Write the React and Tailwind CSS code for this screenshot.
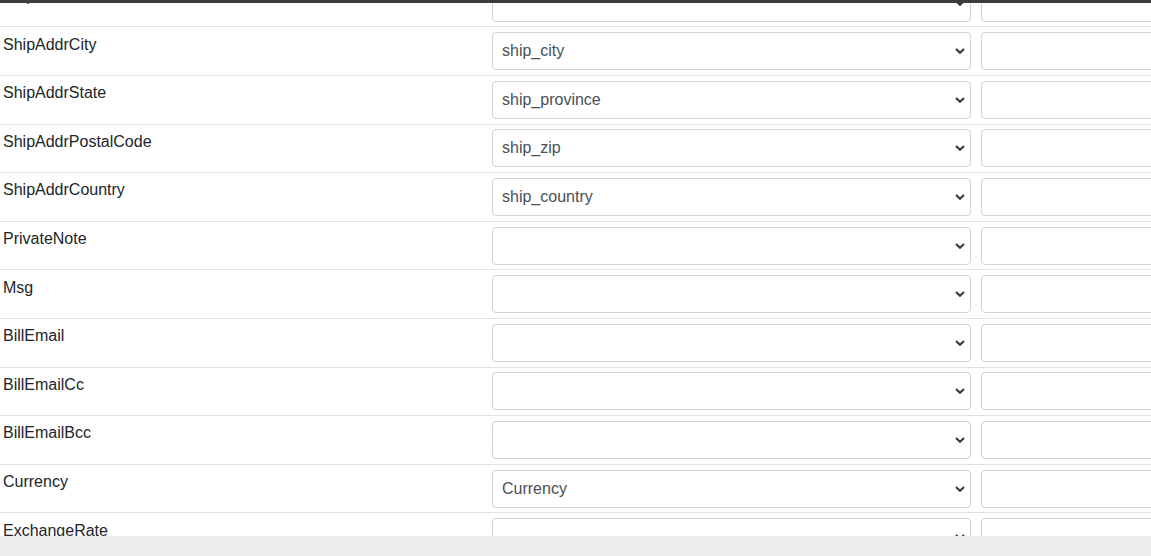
import React from 'react';

const rows = [
  { label: 'ShipAddrLine3', value: '' },
  { label: 'ShipAddrCity', value: 'ship_city' },
  { label: 'ShipAddrState', value: 'ship_province' },
  { label: 'ShipAddrPostalCode', value: 'ship_zip' },
  { label: 'ShipAddrCountry', value: 'ship_country' },
  { label: 'PrivateNote', value: '' },
  { label: 'Msg', value: '' },
  { label: 'BillEmail', value: '' },
  { label: 'BillEmailCc', value: '' },
  { label: 'BillEmailBcc', value: '' },
  { label: 'Currency', value: 'Currency' },
  { label: 'ExchangeRate', value: '' },
];

function Chevron() {
  return (
    <svg
      className="absolute right-[6px] top-1/2 -translate-y-1/2 pointer-events-none"
      width="10"
      height="7"
      viewBox="0 0 10 7"
    >
      <path d="M1 1.5 L5 5.2 L9 1.5" fill="none" stroke="#3a3d40" strokeWidth="2.2" />
    </svg>
  );
}

function MappingRow({ label, value }) {
  return (
    <div className="flex border-t border-[#dee2e6]">
      <div className="w-[487px] shrink-0 pl-[3px] pt-[5.3px] leading-6 text-[#212529]">
        {label}
      </div>
      <div className="w-[489px] shrink-0 px-[5px] py-[4.8px]">
        <div className="relative">
          <select
            defaultValue={value}
            className="appearance-none w-full h-[38px] pl-[9px] pr-8 border border-[#ced4da] rounded bg-white text-[#495057] text-base outline-none"
          >
            <option value="">{''}</option>
            {value && <option value={value}>{value}</option>}
          </select>
          <Chevron />
        </div>
      </div>
      <div className="w-[400px] shrink-0 py-[4.8px] pl-[5px]">
        <input
          type="text"
          className="w-full h-[38px] border border-[#ced4da] rounded bg-white outline-none"
        />
      </div>
    </div>
  );
}

export default function App() {
  return (
    <div
      className="w-[1151px] h-[556px] overflow-hidden bg-[#ececec] text-base"
      style={{ fontFamily: '"Liberation Sans", Arial, sans-serif' }}
    >
      <div className="h-[3px] bg-[#3a3d40]" />
      <div className="h-[533px] overflow-hidden bg-white">
        <div className="mt-[-25.2px]">
          {rows.map((r) => (
            <MappingRow key={r.label} {...r} />
          ))}
        </div>
      </div>
    </div>
  );
}
